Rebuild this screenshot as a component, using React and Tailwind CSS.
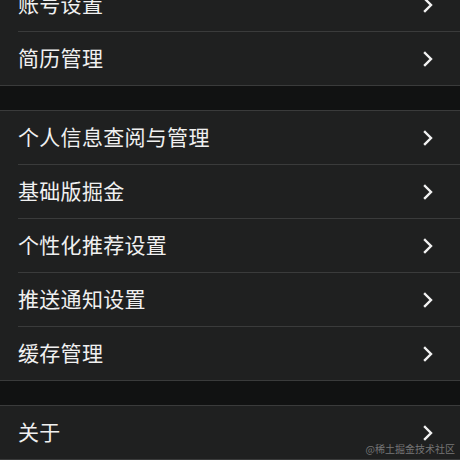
import React from "react";

function Chevron() {
  return (
    <svg width="12" height="16" viewBox="0 0 12 16" className="shrink-0">
      <path d="M3 2 L9 8 L3 14" fill="none" stroke="#f2f2f2" strokeWidth="2.4" strokeLinecap="square" strokeLinejoin="miter" />
    </svg>
  );
}

function Row({ label, last }) {
  return (
    <div className="bg-[#1f2020]">
      <div className="h-[53px] flex items-center pl-[18px] pr-[26px]">
        <span className="flex-1 text-[21px] leading-none text-[#f0f0f0] tracking-[0.3px] pb-[3px]">{label}</span>
        <Chevron />
      </div>
      {!last && (
        <div className="pl-[18px]">
          <div className="h-px bg-[#3a3b3b]" />
        </div>
      )}
    </div>
  );
}

function Band() {
  return <div className="h-[24px] bg-[#111212] border-y border-[#3a3b3b] box-content" />;
}

export default function App() {
  const sections = [
    ["账号设置", "简历管理"],
    ["个人信息查阅与管理", "基础版掘金", "个性化推荐设置", "推送通知设置", "缓存管理"],
    ["关于"],
  ];
  return (
    <div
      className="relative w-[460px] h-[460px] overflow-hidden bg-[#1f2020]"
      style={{ fontFamily: '"Noto Sans CJK SC", "Noto Sans", sans-serif' }}
    >
      <div className="mt-[-22px] flex flex-col">
        {sections.map((items, si) => (
          <React.Fragment key={si}>
            {si > 0 && <Band />}
            {items.map((it, i) => (
              <Row key={it} label={it} last={i === items.length - 1} />
            ))}
          </React.Fragment>
        ))}
        <div className="h-px bg-[#3a3b3b]" />
      </div>
      <div className="absolute right-[5px] bottom-[6px] text-[10px] leading-none text-[#8a8a8a] opacity-80">
        @稀土掘金技术社区
      </div>
    </div>
  );
}
